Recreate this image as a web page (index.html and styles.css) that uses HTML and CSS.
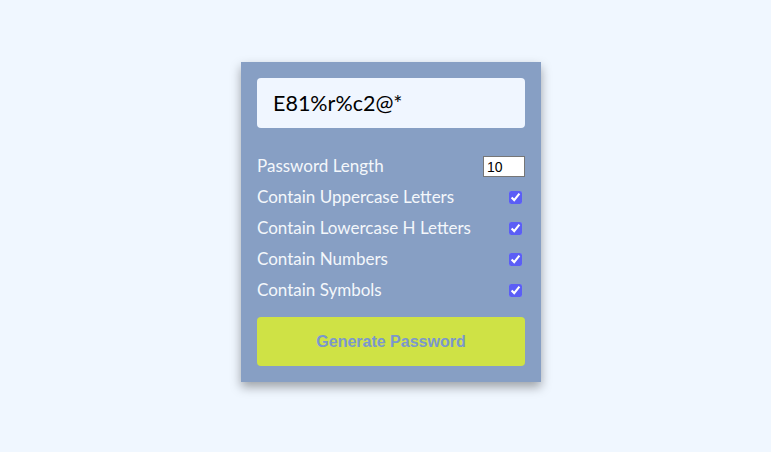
FILE: index.html
```html
<!DOCTYPE html>
<html>
<head>
<meta charset="utf-8">
<link rel="stylesheet" href="styles.css">
</head>
<body>
<div class="card">
  <div class="result">E81%r%c2@*</div>
  <div class="settings">
    <div class="row"><label>Password Length</label><input class="len" type="number" value="10"></div>
    <div class="row"><label>Contain Uppercase Letters</label><input type="checkbox" checked></div>
    <div class="row"><label>Contain Lowercase H Letters</label><input type="checkbox" checked></div>
    <div class="row"><label>Contain Numbers</label><input type="checkbox" checked></div>
    <div class="row"><label>Contain Symbols</label><input type="checkbox" checked></div>
  </div>
  <button class="btn">Generate Password</button>
</div>
</body>
</html>
```
FILE: styles.css
```css
html, body { margin: 0; height: 100%; }
body {
  background: #f0f7ff;
  font-family: "Lato", "Open Sans", sans-serif;
  display: flex;
  justify-content: center;
  padding: 62px 0 0 11px;
  box-sizing: border-box;
}
.card {
  width: 300px;
  height: 320px;
  box-sizing: border-box;
  background: #879fc4;
  padding: 16px;
  box-shadow: 0 5px 10px rgba(0,0,0,0.35);
  display: flex;
  flex-direction: column;
}
.result {
  height: 50px;
  background: #f0f6ff;
  border-radius: 4px;
  padding: 0 16px;
  display: flex;
  align-items: center;
  font-size: 21.5px;
  color: #000;
}
.settings {
  margin-top: 23px;
  display: flex;
  flex-direction: column;
}
.row {
  height: 31px;
  display: flex;
  align-items: center;
  justify-content: space-between;
  color: #f4f7fb;
  font-size: 17px;
}
.row label {
  padding-bottom: 2px;
}
.len {
  width: 42px;
  height: 21px;
  box-sizing: border-box;
  border: 1px solid #767676;
  background: #fff;
  font-family: Arial, "Liberation Sans", sans-serif;
  font-size: 14px;
  padding: 1px 3px;
  margin: 0;
}
input[type=checkbox] {
  width: 13px;
  height: 13px;
  margin: 0 3px 0 0;
  accent-color: #5b5ef6;
}
.btn {
  margin-top: 11px;
  height: 49px;
  border: none;
  border-radius: 4px;
  background: #cfe245;
  color: #7b97cd;
  font-family: "Liberation Sans", Arial, sans-serif;
  font-weight: bold;
  font-size: 16px;
}
```
